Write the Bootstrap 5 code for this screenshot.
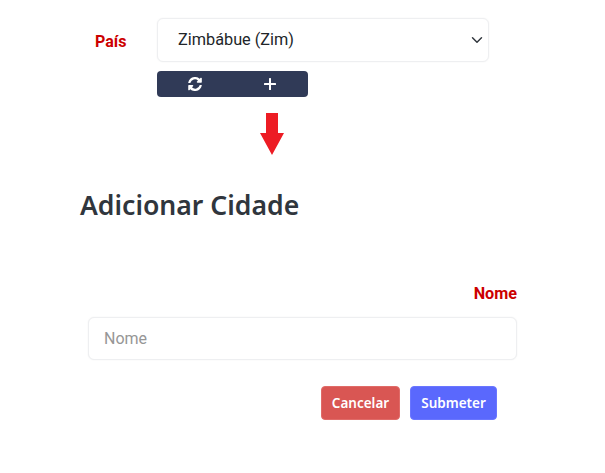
<!DOCTYPE html>
<html lang="pt">
<head>
<meta charset="utf-8">
<title>Adicionar Cidade</title>
<link href="https://cdn.jsdelivr.net/npm/bootstrap@5.3.0/dist/css/bootstrap.min.css" rel="stylesheet">
<style>
body{background:#fff;font-family:Roboto,sans-serif;}
.page-wrap{width:605px;height:473px;padding-top:18px;overflow:hidden;}
.pais-row{padding-left:95px;}
.pais-label{width:62px;color:#cc0000;font-weight:700;font-size:16px;line-height:19px;margin:14px 0 0 0;}
.pais-col{width:332px;}
.pais-select{height:44px;font-size:16.3px;font-family:Roboto,sans-serif;color:#212529;border:1px solid #eeeff1;border-radius:6px;padding:0 36px 0 20px;box-shadow:0 0 2px rgba(0,0,0,.05);background-position:right 3px center;}
.tool-group{margin-top:9px;width:151px;height:26px;}
.tool-btn{background:#303a57;border:0;color:#fff;padding:0;height:26px;display:flex;align-items:center;justify-content:center;}
.tool-btn:hover{background:#303a57;color:#fff;}
.tool-left{width:76px;border-right:1px solid #2b3450;border-radius:4px 0 0 4px;}
.tool-right{width:75px;border-radius:0 4px 4px 0;}
.arrow-wrap{padding-left:260px;margin-top:16px;height:42px;line-height:0;}
.title-text{font-family:"Noto Sans",sans-serif;font-weight:600;font-size:26.6px;line-height:32px;color:#30363d;margin:34px 0 0 80px;}
.form-wrap{width:429px;margin:63px 0 0 88px;}
.nome-label{color:#cc0000;font-weight:700;font-size:16.2px;line-height:19px;margin:0 0 14px;display:block;text-align:right;}
.nome-input{height:43px;font-size:16px;font-family:Roboto,sans-serif;border:1px solid #eeeff1;border-radius:6px;padding:0 15px;box-shadow:0 0 2px rgba(0,0,0,.05);}
.nome-input::placeholder{color:#969696;opacity:1;}
.actions{margin:26px 20px 0 0;gap:10px;}
.act-btn{height:34px;padding:0;font-family:"Noto Sans",sans-serif;font-weight:600;font-size:13.5px;color:#fff;border-radius:4px;display:flex;align-items:center;justify-content:center;}
.act-cancel{width:79px;background:#d95653;border:1px solid #e06b68;}
.act-cancel:hover{background:#d95653;color:#fff;border-color:#e06b68;}
.act-submit{width:87px;background:#5a68fd;border:1px solid #6a76ff;}
.act-submit:hover{background:#5a68fd;color:#fff;border-color:#6a76ff;}
</style>
</head>
<body>
<div class="page-wrap">
  <div class="d-flex align-items-start pais-row">
    <label class="pais-label" for="pais">País</label>
    <div class="pais-col">
      <select id="pais" class="form-select pais-select">
        <option>Zimbábue (Zim)</option>
      </select>
      <div class="btn-group tool-group" role="group">
        <button type="button" class="btn tool-btn tool-left" aria-label="Atualizar">
          <svg width="14" height="14" viewBox="0 0 512 512" fill="#fff"><path d="M370.7 133.3A168 168 0 0 0 89.6 209.9a12 12 0 0 1-11.6 9.1H20.9a12 12 0 0 1-11.8-14.2C30.5 87.2 133.9-2 256-2c66.9 0 127.6 26.4 172.3 69.3l36.2-36.2c15.1-15.1 41-4.4 41 17V184c0 13.3-10.7 24-24 24H345.4c-21.4 0-32.1-25.9-17-41l42.3-39.7zM32 296h136.6c21.4 0 32.1 25.9 17 41l-42.3 41.7a168 168 0 0 0 281.1-76.6 12 12 0 0 1 11.6-9.1h57.1a12 12 0 0 1 11.8 14.2C483.5 424.8 380.1 514 258 514c-66.9 0-127.6-26.4-172.3-69.3l-36.2 36.2C34.400 496 8.500 485.300 8.500 463.900V320c0-13.300 10.200-24 23.500-24z"/></svg>
        </button>
        <button type="button" class="btn tool-btn tool-right" aria-label="Adicionar">
          <svg width="12" height="12" viewBox="0 0 12 12" fill="#fff"><rect x="5" y="0" width="2" height="12" rx=".5"/><rect x="0" y="5" width="12" height="2" rx=".5"/></svg>
        </button>
      </div>
    </div>
  </div>
  <div class="arrow-wrap">
    <svg width="24" height="42" viewBox="0 0 24 42" fill="#ed1c24"><path d="M6 0H18V20H24L12 42L0 20H6Z"/></svg>
  </div>
  <h1 class="title-text">Adicionar Cidade</h1>
  <div class="form-wrap">
    <label class="nome-label" for="nome">Nome</label>
    <input id="nome" type="text" class="form-control nome-input" placeholder="Nome">
    <div class="d-flex justify-content-end actions">
      <button type="button" class="btn act-btn act-cancel">Cancelar</button>
      <button type="button" class="btn act-btn act-submit">Submeter</button>
    </div>
  </div>
</div>
<script src="https://cdn.jsdelivr.net/npm/bootstrap@5.3.0/dist/js/bootstrap.bundle.min.js"></script>
</body>
</html>
